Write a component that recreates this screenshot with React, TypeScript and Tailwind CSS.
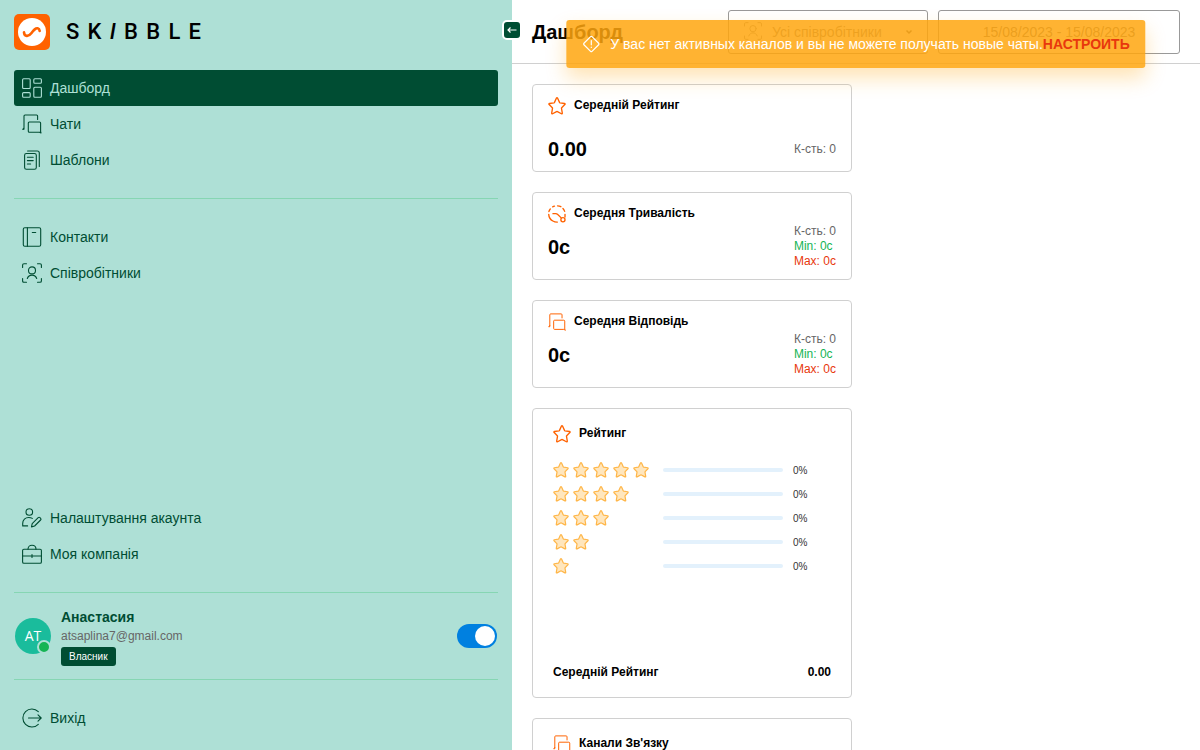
import type { ReactNode } from "react";

type IconName =
  | "dashboard"
  | "chats"
  | "templates"
  | "contacts"
  | "employees"
  | "account"
  | "company"
  | "logout"
  | "duration"
  | "star";

const STAR =
  "M9.300 1.300q.7-1 1.400 0l2.100 4.700q.2.400.6.500l4.900.7q1.200.3.400 1.200l-3.500 3.600q-.3.300-.2.700l.9 5.200q.1 1.200-1 .7l-4.400-2.400q-.5-.2-1 0l-4.400 2.400q-1.100.5-1-.7l.9-5.200q.1-.4-.2-.7L1.300 8.400q-.8-.9.400-1.200l4.900-.7q.4-.1.6-.5z";

const icons: Record<IconName, ReactNode> = {
  dashboard: (
    <>
      <rect x=".6" y=".7" width="7.6" height="9.8" rx="1" />
      <rect x="11.8" y=".7" width="7.6" height="4.6" rx="1" />
      <rect x="11.8" y="9.2" width="7.6" height="10.1" rx="1" />
      <rect x=".6" y="14.6" width="7.6" height="4.7" rx="1" />
    </>
  ),
  chats: (
    <>
      <path d="M15.6 5.5V2q0-1-1-1H3Q2 1 2 2v13.2l-1.2.2 1.2-1.6" />
      <path d="M19 19l-1.4-.8H7.3q-1 0-1-1V9q0-1 1-1h10.3q1 0 1 1v8.5z" />
    </>
  ),
  templates: (
    <>
      <rect x="2.6" y="3.5" width="11.7" height="15.8" rx="1.8" />
      <path d="M5.6 1h9.7q2 0 2 2v13.5M5.4 7.2h5.8M5.4 10.6h5.8M5.4 14h3.2" />
    </>
  ),
  contacts: (
    <>
      <rect x="1.3" y=".7" width="17.4" height="18.6" rx="1.5" />
      <path d="M5.4.7v18.6M10.3 5.5h3.4" />
    </>
  ),
  employees: (
    <>
      <circle cx="10" cy="7.4" r="3.5" />
      <path d="M5.3 15.5c.8-2.2 2.6-3.4 4.7-3.4s3.9 1.2 4.7 3.4" />
      <path d="M.6 4.500V2Q.6.7 2 .7h2.500M15.500.7h2.500q1.400 0 1.400 1.300v2.500M19.400 15.500v2.500q0 1.300-1.400 1.300h-2.500M4.500 19.300H2Q.6 19.300.6 18v-2.500" />
    </>
  ),
  account: (
    <>
      <circle cx="7.3" cy="4" r="3.3" />
      <path d="M5.6 17.9H.7v-2.4c0-3.7 2.6-6 6-6 1.400 0 2.600.3 3.600.9" />
      <path d="M9.500 18.900l.7-3.200 6-6q.9-.8 1.800 0l.6.6q.8.9 0 1.700l-6 6z" />
    </>
  ),
  company: (
    <>
      <rect x=".6" y="5.300" width="18.800" height="14" rx="1.300" />
      <path d="M6 5.300C6 2.600 7.600 1.300 10 1.300s4 1.300 4 4M.6 12h7.600M11.800 12h7.600M10 10.500v3M8.200 12h3.600" />
    </>
  ),
  logout: (
    <>
      <path d="M16.300 3.700A9 9 0 1 0 16.300 16.300" />
      <path d="M6.500 10h12.700M16 6.800l3.200 3.200-3.200 3.200" />
    </>
  ),
  duration: (
    <>
      <path d="M1 7.300q.6-1.600 1.600-2.900M5.200 2.100q1-.6 2-.9M10.600.9q2 .1 3.700 1M16.600 3.900q1.300 1.400 1.900 3.200M.8 10.400q.3 5 4.600 7.400 2.300 1.300 5 1.200M18.900 10.400v3" />
      <path d="M5.500 9.600h3.200q1 0 1.800.7l4.200 4" />
      <circle cx="16.600" cy="16.400" r="2.300" />
    </>
  ),
  star: <path d={STAR} />,
};

function Icon({ name, className = "size-5" }: { name: IconName; className?: string }) {
  return (
    <svg
      viewBox="0 0 20 20"
      className={`shrink-0 ${className}`}
      fill="none"
      stroke="currentColor"
      strokeWidth={name === "star" || name === "duration" ? 1.5 : 1.1}
      strokeLinecap="round"
      strokeLinejoin="round"
      aria-hidden="true"
    >
      {icons[name]}
    </svg>
  );
}

function NavItem({ icon, label, active }: { icon: IconName; label: string; active?: boolean }) {
  return (
    <a
      href="#"
      className={`flex h-9 items-center gap-2 rounded-[3px] px-2 text-sm ${
        active ? "bg-[#004d33] text-[#aee0d6]" : "text-[#004d33]"
      }`}
    >
      <Icon name={icon} />
      {label}
    </a>
  );
}

function Logo() {
  return (
    <div className="flex items-center gap-4">
      <svg viewBox="0 0 36 36" className="size-9" aria-hidden="true">
        <rect width="36" height="36" rx="5" fill="#ff6200" />
        <circle cx="18" cy="18" r="14" fill="#fff" />
        <path
          d="M10 18.300C10.400 22.800 14.500 23 17.300 19.300C20.200 15.500 21.500 13.900 23.700 14.300Q25.400 14.700 25.700 17"
          fill="none"
          stroke="#ff6200"
          strokeWidth="2.600"
          strokeLinecap="round"
        />
      </svg>
      <div className="flex w-[135px] justify-between font-['Roboto',sans-serif] text-[22px] leading-9 font-medium text-black">
        <span>S</span>
        <span>K</span>
        <span className="italic">I</span>
        <span>B</span>
        <span>B</span>
        <span>L</span>
        <span>E</span>
      </div>
    </div>
  );
}

function Sidebar() {
  return (
    <aside className="relative flex flex-col bg-[#aee0d6] p-3.5">
      <Logo />
      <button
        type="button"
        aria-label="Згорнути меню"
        className="absolute top-5 -right-2.5 z-10 flex size-5 items-center justify-center rounded-[5px] border-2 border-white bg-[#004d33] text-white"
      >
        <svg viewBox="0 0 10 10" className="size-2.5" fill="none" stroke="currentColor" strokeWidth="1.200" aria-hidden="true">
          <path d="M9.500 5H1M3.500 2.500L1 5l2.500 2.500" />
        </svg>
      </button>

      <nav className="mt-5">
        <NavItem icon="dashboard" label="Дашборд" active />
        <NavItem icon="chats" label="Чати" />
        <NavItem icon="templates" label="Шаблони" />
        <hr className="my-5 border-[#86d6b3]" />
        <NavItem icon="contacts" label="Контакти" />
        <NavItem icon="employees" label="Співробітники" />
      </nav>

      <div className="mt-auto">
        <NavItem icon="account" label="Налаштування акаунта" />
        <NavItem icon="company" label="Моя компанія" />
        <div className="my-5 flex h-22 items-center border-y border-[#86d6b3] px-px">
          <div className="relative flex size-9 items-center justify-center rounded-full bg-[#1abc9c] font-['Open_Sans',sans-serif] text-sm text-white">
            AT
            <span className="absolute right-0 bottom-0 size-3.5 rounded-full border-2 border-[#aee0d6] bg-[#16b455]" />
          </div>
          <div className="ml-2.5 flex flex-col items-start">
            <span className="text-sm leading-5 font-bold text-[#004d33]">Анастасия</span>
            <span className="text-xs leading-[18px] text-[#666]">atsaplina7@gmail.com</span>
            <span className="mt-0.5 rounded-[3px] bg-[#004d33] px-2 text-[10px] leading-[19px] text-white">Власник</span>
          </div>
          <label className="ml-auto flex h-6 w-10 cursor-pointer rounded-full bg-[#0080e0] p-0.5 has-[:checked]:justify-end">
            <input type="checkbox" role="switch" aria-label="Онлайн" defaultChecked className="sr-only" />
            <span className="size-5 rounded-full bg-white" />
          </label>
        </div>
        <NavItem icon="logout" label="Вихід" />
      </div>
    </aside>
  );
}

function Header() {
  return (
    <header className="flex h-16 shrink-0 items-center gap-2.5 border-b border-[#d0d0d0] px-5">
      <h1 className="mr-auto text-xl font-bold text-black">Дашборд</h1>
      <div className="relative w-[200px]">
        <Icon name="employees" className="absolute top-3 left-4 size-[18px] text-[#999]" />
        <select
          aria-label="Співробітники"
          className="h-11 w-full appearance-none rounded-[3px] border border-[#999] bg-transparent pl-[43px] text-sm text-[#888]"
        >
          <option>Усі співробітники</option>
        </select>
        <svg viewBox="0 0 8 8" className="absolute top-[18px] right-[15px] size-2" fill="none" stroke="#666" strokeWidth="1.500" aria-hidden="true">
          <path d="M1.500 2.500L4 5l2.500-2.500" />
        </svg>
      </div>
      <input
        aria-label="Період"
        readOnly
        defaultValue="15/08/2023 - 15/08/2023"
        className="h-11 w-[242px] rounded-[3px] border border-[#999] bg-white text-center text-sm text-[#777]"
      />
    </header>
  );
}

function Toast() {
  return (
    <div
      role="alert"
      className="absolute top-5 left-1/2 z-20 flex h-12 -translate-x-1/2 items-center rounded-[3px] bg-[#ffa60e]/85 px-4 text-sm whitespace-nowrap text-white shadow-[0_10px_20px_rgba(255,166,14,0.3)]"
    >
      <svg viewBox="0 0 18 18" className="mr-2.5 size-[18px]" fill="none" stroke="currentColor" strokeWidth="1.200" strokeLinecap="round" aria-hidden="true">
        <rect x="3.300" y="3.300" width="11.400" height="11.400" rx="1" transform="rotate(45 9 9)" />
        <path d="M9 5.500v4.300M9 12.200v.2" />
      </svg>
      У вас нет активных каналов и вы не можете получать новые чаты.
      <a href="#" className="font-bold text-[#e8380d]">НАСТРОИТЬ</a>
    </div>
  );
}

interface StatCardProps {
  icon: IconName;
  title: string;
  value: string;
  count: number;
  min?: string;
  max?: string;
}

function StatCard({ icon, title, value, count, min, max }: StatCardProps) {
  return (
    <section className="flex h-22 flex-col justify-between rounded border border-[#d0d0d0] px-[15px] py-2.5">
      <h2 className="flex items-start gap-2 text-xs leading-5 font-bold text-black">
        <Icon name={icon} className="mt-0.5 size-[18px] text-[#ff6200]" />
        {title}
      </h2>
      <div className={`flex justify-between ${min ? "items-center" : "items-end"}`}>
        <span className="text-xl leading-6 font-bold text-black">{value}</span>
        <div className={`text-xs leading-[15px] text-[#666] ${min ? "" : "pb-1"}`}>
          <p>К-сть: {count}</p>
          {min && <p className="text-[#16b455]">Min: {min}</p>}
          {max && <p className="text-[#e8380d]">Max: {max}</p>}
        </div>
      </div>
    </section>
  );
}

const ratings = [
  { stars: 5, percent: 0 },
  { stars: 4, percent: 0 },
  { stars: 3, percent: 0 },
  { stars: 2, percent: 0 },
  { stars: 1, percent: 0 },
];

function PanelTitle({ icon, children }: { icon: IconName; children: ReactNode }) {
  return (
    <h2 className="flex items-start gap-2 text-xs leading-4 font-bold text-black">
      <Icon name={icon} className="size-[18px] text-[#ff6200]" />
      {children}
    </h2>
  );
}

function RatingCard() {
  return (
    <section className="flex min-h-[290px] flex-col rounded border border-[#d0d0d0] px-5 py-4">
      <PanelTitle icon="star">Рейтинг</PanelTitle>
      <ul className="mt-[15px]">
        {ratings.map((rating) => (
          <li key={rating.stars} className="flex h-6 items-center text-[10px] text-[#333]">
            <div className="flex w-[110px] gap-1">
              {Array.from({ length: rating.stars }, (_, i) => (
                <svg key={i} viewBox="0 0 20 20" className="size-4" fill="#ffe6bd" stroke="#ffb648" strokeWidth="1.500" strokeLinejoin="round" aria-hidden="true">
                  <path d={STAR} />
                </svg>
              ))}
            </div>
            <div className="mr-2.5 h-1 w-[120px] rounded-full bg-[#e3f1fc]">
              <div className="h-1 rounded-full bg-[#0080e0]" style={{ width: `${rating.percent}%` }} />
            </div>
            {rating.percent}%
          </li>
        ))}
      </ul>
      <div className="mt-auto flex justify-between text-xs leading-[18px] font-bold text-black">
        <span>Середній Рейтинг</span>
        <span>0.00</span>
      </div>
    </section>
  );
}

export default function App() {
  return (
    <div className="grid h-screen grid-cols-[32fr_43fr] bg-white font-['Liberation_Sans',Arial,sans-serif]">
      <Sidebar />
      <main className="relative flex min-h-0 min-w-0 flex-col">
        <Toast />
        <Header />
        <div className="grow overflow-y-auto p-5 [scrollbar-width:none]">
          <div className="flex max-w-80 flex-col gap-5">
            <StatCard icon="star" title="Середній Рейтинг" value="0.00" count={0} />
            <StatCard icon="duration" title="Середня Тривалість" value="0с" count={0} min="0с" max="0с" />
            <StatCard icon="chats" title="Середня Відповідь" value="0с" count={0} min="0с" max="0с" />
            <RatingCard />
            <section className="min-h-[290px] rounded border border-[#d0d0d0] px-5 py-4">
              <PanelTitle icon="chats">Канали Зв'язку</PanelTitle>
            </section>
          </div>
        </div>
      </main>
    </div>
  );
}
